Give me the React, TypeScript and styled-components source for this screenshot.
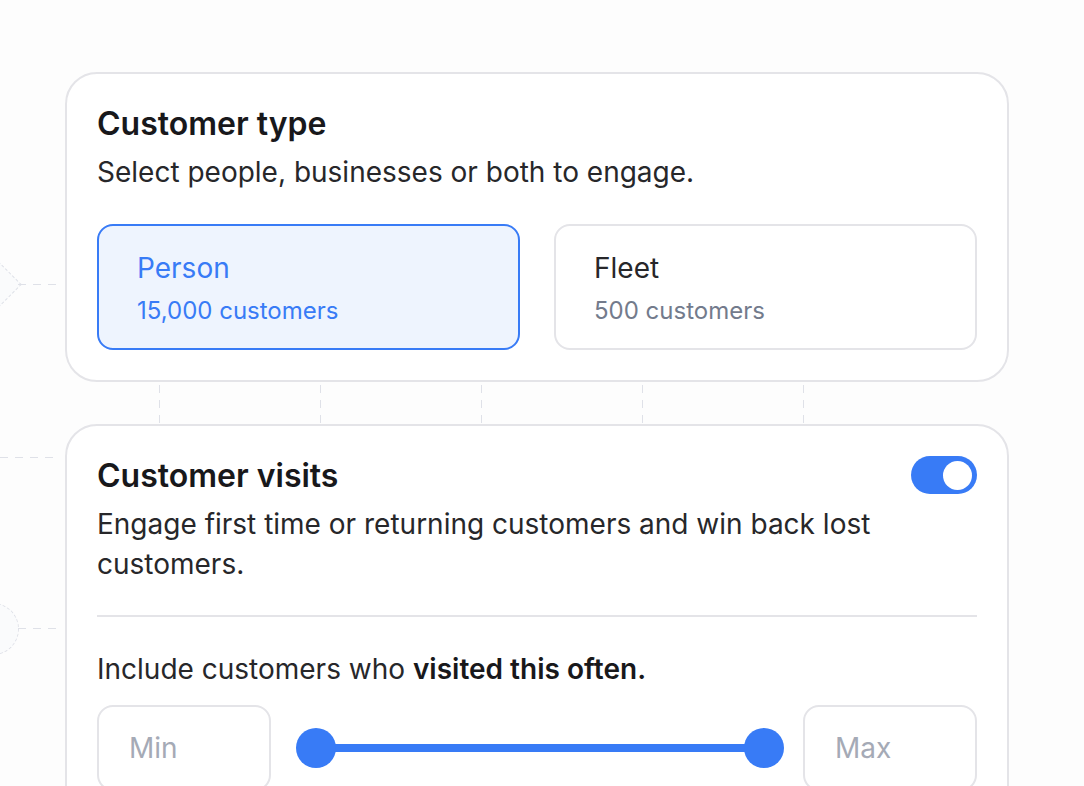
import styled, { createGlobalStyle } from "styled-components";

const GlobalStyle = createGlobalStyle`
  html, body {
    margin: 0;
    padding: 0;
    background: #fdfdfd;
    font-family: Inter, "Noto Sans", sans-serif;
    color: #18181b;
    overflow: hidden;
  }
`;

const blue = "#387bf6";
const line = "#e4e4e8";

const Page = styled.div`
  position: relative;
  height: 786px;
  padding: 72px 0 0 65px;
  box-sizing: border-box;
`;

// decorative canvas nodes peeking in from the left edge
const Diamond = styled.div`
  position: absolute;
  left: -18px;
  top: 268px;
  width: 31px;
  height: 31px;
  transform: rotate(45deg);
  border: 1px dashed #dfe1e8;
  background: #fafbfc;
`;

const Circle = styled.div`
  position: absolute;
  left: -33px;
  top: 603px;
  width: 50px;
  height: 50px;
  border-radius: 50%;
  border: 1px dashed #dfe1e8;
  background: #fafbfc;
`;

const HDash = styled.div<{ $top: number; $left: number }>`
  position: absolute;
  top: ${(p) => p.$top}px;
  left: ${(p) => p.$left}px;
  width: ${(p) => 60 - p.$left}px;
  height: 1px;
  background: repeating-linear-gradient(
    to right,
    #dfe1e8 0 8px,
    transparent 8px 15px
  );
`;

const Column = styled.div`
  width: 944px;
  display: flex;
  flex-direction: column;
`;

const Card = styled.section`
  position: relative;
  background: #ffffff;
  border: 2px solid ${line};
  border-radius: 32px;
  padding: 30px;
`;

const HeaderRow = styled.div`
  display: flex;
  justify-content: space-between;
  align-items: flex-start;
`;

const Title = styled.h2`
  margin: 0;
  font-size: 32px;
  line-height: 40px;
  font-weight: 600;
  color: #18181b;
`;

const Subtitle = styled.p`
  margin: 8px 0 0;
  font-size: 28px;
  line-height: 40px;
  color: #27272a;
  max-width: 820px;
`;

const Options = styled.div`
  display: grid;
  grid-template-columns: 1fr 1fr;
  gap: 34px;
  margin-top: 32px;
`;

const Option = styled.button<{ $active?: boolean }>`
  text-align: left;
  font-family: inherit;
  height: 126px;
  box-sizing: border-box;
  padding: 26px 38px 0;
  border-radius: 16px;
  border: 2px solid ${(p) => (p.$active ? blue : line)};
  background: ${(p) => (p.$active ? "#eef4fe" : "#ffffff")};
  display: flex;
  flex-direction: column;
  gap: 13px;
`;

const OptionName = styled.span<{ $active?: boolean }>`
  font-size: 28px;
  line-height: 32px;
  color: ${(p) => (p.$active ? blue : "#27272a")};
`;

const OptionCount = styled.span<{ $active?: boolean }>`
  font-size: 24px;
  line-height: 28px;
  color: ${(p) => (p.$active ? blue : "#737b8c")};
`;

const Connector = styled.div`
  height: 42px;
  display: flex;
  padding-left: 94px;
  gap: 160px;
`;

const VDash = styled.div`
  width: 1px;
  height: 100%;
  background: repeating-linear-gradient(
    to bottom,
    transparent 0 3px,
    #dfe1e8 3px 11px,
    transparent 11px 15px
  );
`;

const Toggle = styled.div<{ $on?: boolean }>`
  width: 66px;
  height: 38px;
  border-radius: 19px;
  background: ${(p) => (p.$on ? blue : "#d4d4d8")};
  display: flex;
  align-items: center;
  justify-content: ${(p) => (p.$on ? "flex-end" : "flex-start")};
  padding: 0 5px;
  box-sizing: border-box;
  flex-shrink: 0;
`;

const Knob = styled.div`
  width: 29px;
  height: 29px;
  border-radius: 50%;
  background: #ffffff;
`;

const Divider = styled.hr`
  border: none;
  height: 2px;
  background: ${line};
  margin: 31px 0 32px;
`;

const Label = styled.p`
  margin: 0;
  font-size: 28px;
  line-height: 40px;
  color: #27272a;

  strong {
    font-weight: 600;
    color: #18181b;
  }
`;

const RangeRow = styled.div`
  display: flex;
  align-items: center;
  margin-top: 16px;
  padding-bottom: 40px;
`;

const NumberBox = styled.div`
  width: 174px;
  height: 86px;
  box-sizing: border-box;
  border: 2px solid ${line};
  border-radius: 16px;
  padding: 0 30px;
  display: flex;
  align-items: center;
  font-size: 28px;
  color: #a5aab6;
  flex-shrink: 0;
`;

const Track = styled.div`
  flex: 1;
  height: 40px;
  margin: 0 19px 0 25px;
  position: relative;
  display: flex;
  align-items: center;
  justify-content: space-between;

  &::before {
    content: "";
    position: absolute;
    left: 20px;
    right: 20px;
    top: 16px;
    height: 8px;
    background: ${blue};
  }
`;

const Thumb = styled.div`
  position: relative;
  width: 40px;
  height: 40px;
  border-radius: 50%;
  background: ${blue};
`;

export default function App() {
  return (
    <>
      <GlobalStyle />
      <Page>
        <Diamond />
        <HDash $top={284} $left={18} />
        <HDash $top={457} $left={0} />
        <Circle />
        <HDash $top={628} $left={18} />

        <Column>
          <Card>
            <Title>Customer type</Title>
            <Subtitle>Select people, businesses or both to engage.</Subtitle>
            <Options>
              <Option $active>
                <OptionName $active>Person</OptionName>
                <OptionCount $active>15,000 customers</OptionCount>
              </Option>
              <Option>
                <OptionName>Fleet</OptionName>
                <OptionCount>500 customers</OptionCount>
              </Option>
            </Options>
          </Card>

          <Connector>
            {[0, 1, 2, 3, 4].map((i) => (
              <VDash key={i} />
            ))}
          </Connector>

          <Card>
            <HeaderRow>
              <Title>Customer visits</Title>
              <Toggle $on>
                <Knob />
              </Toggle>
            </HeaderRow>
            <Subtitle>
              Engage first time or returning customers and win back lost
              customers.
            </Subtitle>
            <Divider />
            <Label>
              Include customers who <strong>visited this often.</strong>
            </Label>
            <RangeRow>
              <NumberBox>Min</NumberBox>
              <Track>
                <Thumb />
                <Thumb />
              </Track>
              <NumberBox>Max</NumberBox>
            </RangeRow>
          </Card>
        </Column>
      </Page>
    </>
  );
}
